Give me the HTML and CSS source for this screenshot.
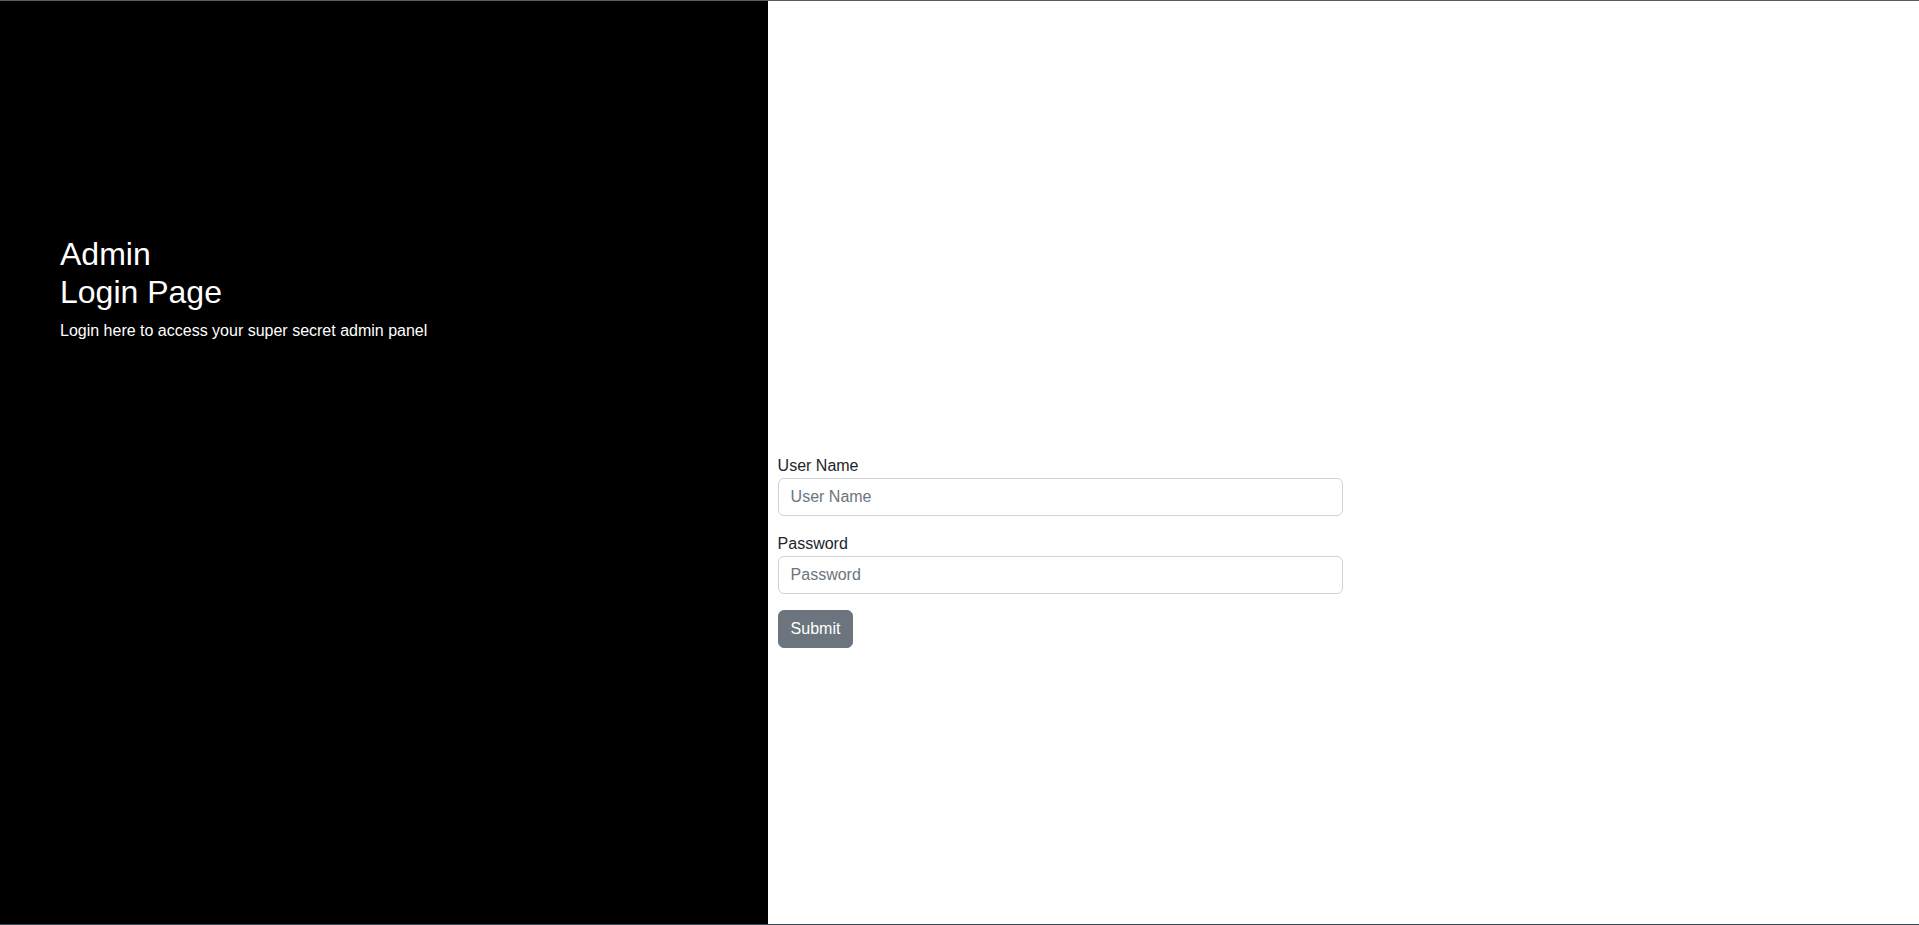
FILE: index.html
```html
<!DOCTYPE html>
<html lang="en">
<head>
    <meta charset="UTF-8">
    <meta name="viewport" content="width=device-width, initial-scale=1.0">
    <title>Admin Login</title>
    <link rel="stylesheet" href="styles.css">
</head>
<body>

<div class="page">
    <div class="sidenav">
        <div class="login-main-text">
            <h2>Admin<br>Login Page</h2>
            <p>Login here to access your super secret admin panel</p>
        </div>
    </div>

    <div class="main">
        <div class="col-half">
            <div class="login-form">
                <form>
                    <div class="form-group">
                        <label for="username">User Name</label>
                        <input type="text" id="username" class="form-control" placeholder="User Name">
                    </div>
                    <div class="form-group">
                        <label for="password">Password</label>
                        <input type="password" id="password" class="form-control" placeholder="Password">
                    </div>
                    <button type="submit" class="btn btn-secondary">Submit</button>
                </form>
            </div>
        </div>
    </div>
</div>

</body>
</html>
```

FILE: styles.css
```css
* {
    box-sizing: border-box;
}

body {
    font-family: "Liberation Sans", Arial, sans-serif;
    font-size: 16px;
    line-height: 1.5;
    margin: 0;
    padding: 0;
    color: #212529;
    background-color: #fff;
}

.page {
    display: flex;
    height: 100vh;
    border-top: 1px solid #5c5c5c;
    border-bottom: 1px solid #3b4a52;
}

.sidenav {
    width: 40%;
    flex-shrink: 0;
    background-color: #000;
    padding-top: 20px;
    overflow-x: hidden;
}

.login-main-text {
    margin-top: 20%;
    padding: 60px;
    color: #fff;
}

.login-main-text h2 {
    font-size: 32px;
    font-weight: 300;
    line-height: 1.2;
    margin: 0 0 8px 0;
}

.login-main-text p {
    margin: 0 0 16px 0;
}

.main {
    flex: 1;
    padding: 0 10px;
}

.col-half {
    width: 50%;
}

.login-form {
    margin-top: 80%;
}

.form-group {
    margin-bottom: 16px;
}

label {
    display: inline-block;
}

.form-control {
    display: block;
    width: 100%;
    padding: 6px 12px;
    font-family: inherit;
    font-size: 16px;
    line-height: 1.5;
    color: #212529;
    background-color: #fff;
    border: 1px solid #ced4da;
    border-radius: 6px;
}

.form-control::placeholder {
    color: #6c757d;
}

.btn {
    display: inline-block;
    padding: 6px 12px;
    font-family: inherit;
    font-size: 16px;
    line-height: 1.5;
    border: 1px solid transparent;
    border-radius: 6px;
    cursor: pointer;
}

.btn-secondary {
    background-color: #6c757d;
    border-color: #6c757d;
    color: #fff;
}
```
